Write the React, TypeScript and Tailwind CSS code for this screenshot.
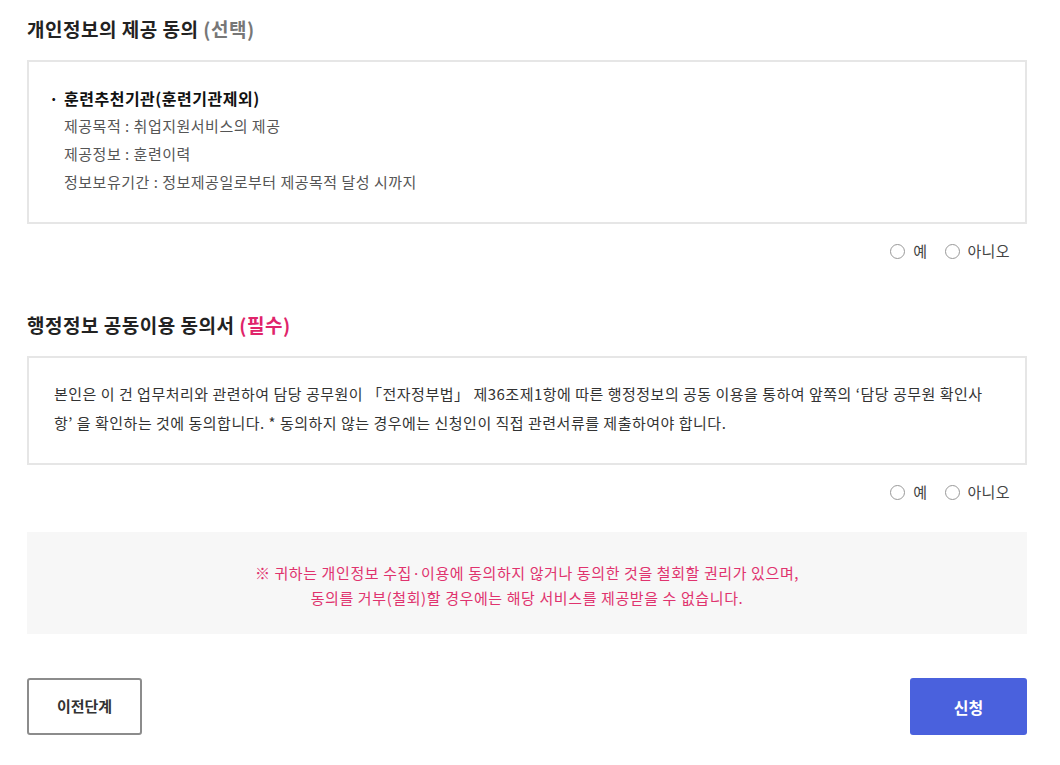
const font = { fontFamily: '"Noto Sans CJK KR", "Noto Sans", sans-serif' };

const Radios = ({ name }: { name: string }) => (
  <div className="mt-[17px] flex h-5 items-center justify-end gap-[18px] pr-[17px] text-[15px] tracking-[0.4px] text-[#444]">
    <label className="flex items-center gap-[8px]">
      <input type="radio" name={name} className="size-[15px] appearance-none rounded-full border border-[#999] bg-white" />
      예
    </label>
    <label className="flex items-center gap-[7px]">
      <input type="radio" name={name} className="size-[15px] appearance-none rounded-full border border-[#999] bg-white" />
      아니오
    </label>
  </div>
);

export default function App() {
  return (
    <div className="min-h-[765px] bg-white pt-[16px]" style={font}>
      <div className="ml-[27px] w-[1000px]">
        <h2 className="text-[19px] font-bold leading-[26px] tracking-[0.5px] text-[#222]">
          개인정보의 제공 동의 <span className="text-[#777]">(선택)</span>
        </h2>

        <div className="mt-[18px] border-2 border-[#e6e6e6] pb-[26px] pl-[20px] pt-[22px] leading-[28px] tracking-[0.5px]">
          <div className="flex text-[16px] font-bold text-[#111]">
            <span className="w-[15px]">·</span>
            <span>훈련추천기관(훈련기관제외)</span>
          </div>
          <div className="pl-[15px] text-[15px] text-[#555]">
            <p>제공목적 : 취업지원서비스의 제공</p>
            <p>제공정보 : 훈련이력</p>
            <p>정보보유기간 : 정보제공일로부터 제공목적 달성 시까지</p>
          </div>
        </div>
        <Radios name="provide" />

        <h2 className="mt-[51px] text-[19px] font-bold leading-[26px] tracking-[0.5px] text-[#222]">
          행정정보 공동이용 동의서 <span className="text-[#e0246a]">(필수)</span>
        </h2>

        <div className="mt-[18px] border-2 border-[#e6e6e6] pb-[26px] pl-[25px] pr-[28px] pt-[21px] text-[15px] leading-[29px] tracking-[0.5px] text-[#333]">
          본인은 이 건 업무처리와 관련하여 담당 공무원이 「전자정부법」 제36조제1항에 따른 행정정보의 공동 이용을 통하여 앞쪽의 ‘담당 공무원 확인사항’ 을 확인하는 것에 동의합니다. * 동의하지 않는 경우에는 신청인이 직접 관련서류를 제출하여야 합니다.
        </div>
        <Radios name="share" />

        <div className="mt-[30px] bg-[#f7f7f7] pb-[24px] pt-[28px] text-center text-[15px] leading-[25px] tracking-[0.6px] text-[#e0336e]">
          <p>※ 귀하는 개인정보 수집·이용에 동의하지 않거나 동의한 것을 철회할 권리가 있으며,</p>
          <p>동의를 거부(철회)할 경우에는 해당 서비스를 제공받을 수 없습니다.</p>
        </div>

        <div className="mt-[44px] flex justify-between">
          <button className="h-[57px] w-[115px] rounded-[3px] border-2 border-[#8c8c8c] bg-white text-[15px] font-bold text-[#333]">
            이전단계
          </button>
          <button className="h-[57px] w-[117px] rounded-[3px] bg-[#4a61dd] text-[16px] font-bold text-white">
            신청
          </button>
        </div>
      </div>
    </div>
  );
}
